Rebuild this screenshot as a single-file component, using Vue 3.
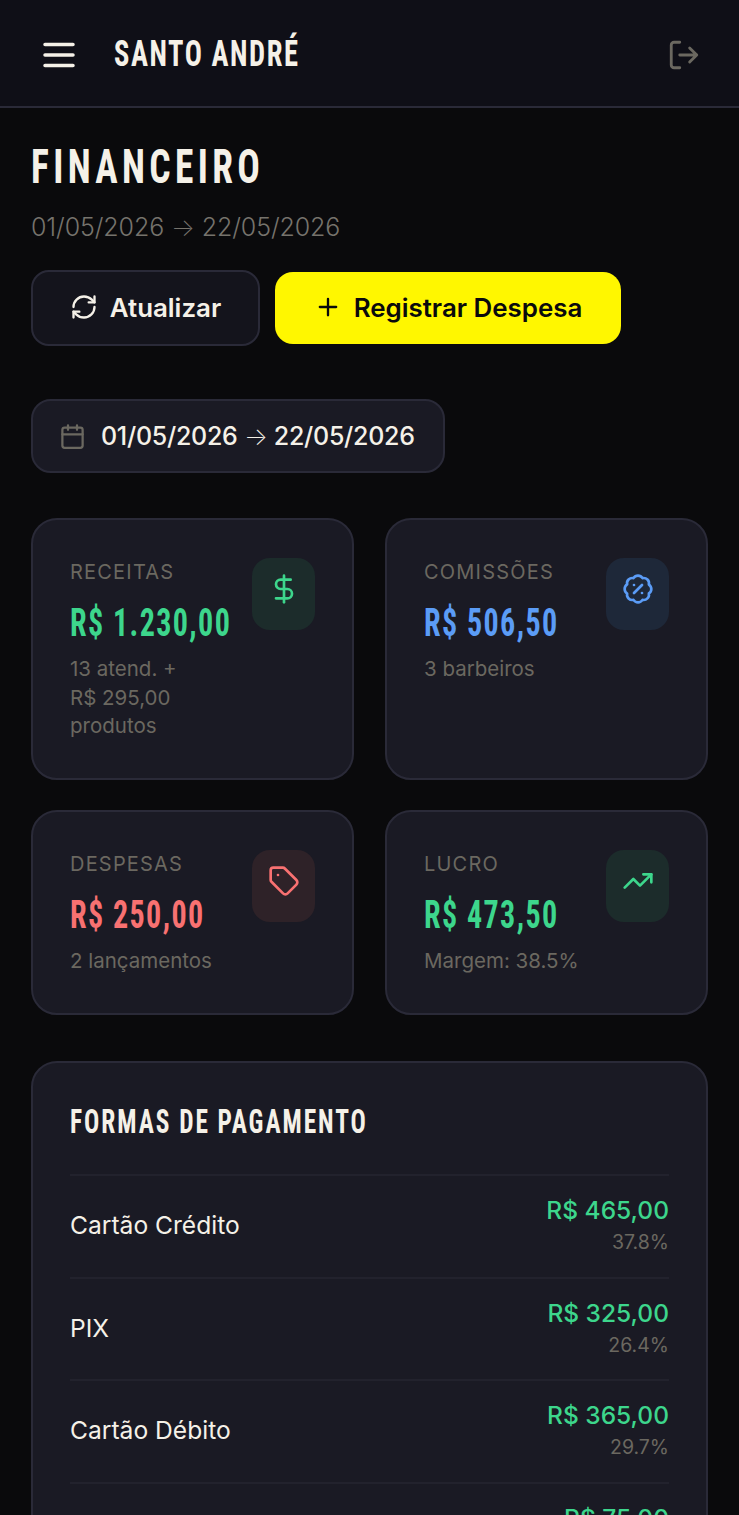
<template>
  <div class="page">
    <header class="topbar">
      <div class="topbar__left">
        <svg class="icon icon--menu" viewBox="0 0 24 24"><path d="M4 6h16M4 12h16M4 18h16" /></svg>
        <span class="brand">SANTO ANDRÉ</span>
      </div>
      <svg class="icon icon--logout" viewBox="0 0 24 24">
        <path d="M9 21H5a2 2 0 0 1-2-2V5a2 2 0 0 1 2-2h4" />
        <path d="M16 17l5-5-5-5M21 12H9" />
      </svg>
    </header>

    <main class="content">
      <h1 class="title">FINANCEIRO</h1>
      <p class="subtitle">{{ from }} <span class="arrow">→</span> {{ to }}</p>

      <div class="actions">
        <button class="btn btn--ghost">
          <svg class="icon icon--btn" viewBox="0 0 24 24">
            <path d="M3 12a9 9 0 0 1 9-9 9.75 9.75 0 0 1 6.74 2.74L21 8" />
            <path d="M21 3v5h-5" />
            <path d="M21 12a9 9 0 0 1-9 9 9.75 9.75 0 0 1-6.74-2.74L3 16" />
            <path d="M8 16H3v5" />
          </svg>
          Atualizar
        </button>
        <button class="btn btn--primary">
          <svg class="icon icon--btn" viewBox="0 0 24 24"><path d="M5 12h14M12 5v14" /></svg>
          Registrar Despesa
        </button>
      </div>

      <div class="range">
        <svg class="icon icon--cal" viewBox="0 0 24 24">
          <path d="M8 2v4M16 2v4M3 10h18" />
          <rect x="3" y="4" width="18" height="18" rx="2" />
        </svg>
        <span>{{ from }} <span class="arrow">→</span> {{ to }}</span>
      </div>

      <section class="stats">
        <article v-for="card in cards" :key="card.label" class="stat">
          <div class="stat__body">
            <div class="stat__label">{{ card.label }}</div>
            <div class="stat__value" :class="'c-' + card.color">{{ card.value }}</div>
            <div class="stat__note">{{ card.note }}</div>
          </div>
          <div class="stat__icon" :class="'bg-' + card.color">
            <svg class="icon icon--stat" :class="'c-' + card.color" viewBox="0 0 24 24" v-html="card.icon"></svg>
          </div>
        </article>
      </section>

      <section class="panel">
        <h2 class="panel__title">FORMAS DE PAGAMENTO</h2>
        <div v-for="row in payments" :key="row.name" class="pay">
          <span class="pay__name">{{ row.name }}</span>
          <div class="pay__right">
            <div class="pay__value">{{ row.value }}</div>
            <div class="pay__pct">{{ row.pct }}</div>
          </div>
        </div>
      </section>
    </main>
  </div>
</template>

<script setup>
const from = '01/05/2026'
const to = '22/05/2026'

const cards = [
  {
    label: 'RECEITAS',
    value: 'R$ 1.230,00',
    note: '13 atend. + R$\u00a0295,00 produtos',
    color: 'green',
    icon: '<path d="M12 2v20" /><path d="M17 5H9.5a3.5 3.5 0 0 0 0 7h5a3.5 3.5 0 0 1 0 7H6" />'
  },
  {
    label: 'COMISSÕES',
    value: 'R$ 506,50',
    note: '3 barbeiros',
    color: 'blue',
    icon: '<path d="M3.85 8.62a4 4 0 0 1 4.78-4.77 4 4 0 0 1 6.74 0 4 4 0 0 1 4.78 4.78 4 4 0 0 1 0 6.74 4 4 0 0 1-4.77 4.78 4 4 0 0 1-6.75 0 4 4 0 0 1-4.78-4.77 4 4 0 0 1 0-6.76Z" /><path d="m15 9-6 6" /><path d="M9 9h.01" /><path d="M15 15h.01" />'
  },
  {
    label: 'DESPESAS',
    value: 'R$ 250,00',
    note: '2 lançamentos',
    color: 'red',
    icon: '<path d="M12.586 2.586A2 2 0 0 0 11.172 2H4a2 2 0 0 0-2 2v7.172a2 2 0 0 0 .586 1.414l8.704 8.704a2.426 2.426 0 0 0 3.42 0l6.58-6.58a2.426 2.426 0 0 0 0-3.42z" /><path d="M7.5 7.5h.01" />'
  },
  {
    label: 'LUCRO',
    value: 'R$ 473,50',
    note: 'Margem: 38.5%',
    color: 'green',
    icon: '<path d="M16 7h6v6" /><path d="m22 7-8.5 8.5-5-5L2 17" />'
  }
]

const payments = [
  { name: 'Cartão Crédito', value: 'R$ 465,00', pct: '37.8%' },
  { name: 'PIX', value: 'R$ 325,00', pct: '26.4%' },
  { name: 'Cartão Débito', value: 'R$ 365,00', pct: '29.7%' },
  { name: 'Dinheiro', value: 'R$ 75,00', pct: '6.1%' }
]
</script>

<style>
html,
body {
  margin: 0;
  background: #0a0a0c;
  height: 1515px;
  overflow: hidden;
}
</style>

<style scoped>
.page {
  font-family: Inter, "Liberation Sans", sans-serif;
  color: #f5f1e8;
  background: #0a0a0c;
}

.icon {
  fill: none;
  stroke: currentColor;
  stroke-width: 2;
  stroke-linecap: round;
  stroke-linejoin: round;
  flex: none;
  display: block;
}

/* no Bebas here, so Roboto gets squeezed to the same narrow caps */
.brand,
.title,
.stat__value,
.panel__title {
  font-family: Roboto, sans-serif;
  font-stretch: 75%;
  font-weight: 700;
  transform: scaleX(0.78);
  transform-origin: left center;
}

.arrow {
  font-weight: 200;
}

.topbar {
  height: 108px;
  box-sizing: border-box;
  padding: 4px 38px 0;
  display: flex;
  align-items: center;
  justify-content: space-between;
  background: #0f0f17;
  border-bottom: 2px solid #2a2a38;
}

.topbar__left {
  display: flex;
  align-items: center;
  gap: 34px;
}

.icon--menu {
  width: 42px;
  height: 42px;
  color: #f5f1e8;
}

.brand {
  display: inline-block;
  font-size: 36.5px;
  line-height: 1;
  letter-spacing: 2px;
  margin-top: -2px;
}

.icon--logout {
  width: 34px;
  height: 34px;
  color: #6b6860;
}

.content {
  padding: 39px 31px 0;
}

.title {
  margin: 0;
  font-size: 48px;
  line-height: 40px;
  letter-spacing: 5.6px;
}

.subtitle {
  margin: 22px 0 0;
  font-size: 25px;
  font-weight: 300;
  letter-spacing: -0.1px;
  line-height: 36px;
  color: #76736c;
}

.actions {
  margin-top: 25px;
  display: flex;
  align-items: center;
  gap: 15px;
}

.btn {
  font-family: inherit;
  font-size: 25.9px;
  font-weight: 600;
  display: flex;
  align-items: center;
  justify-content: center;
  gap: 12px;
  box-sizing: border-box;
  border-radius: 18px;
  padding: 0 0 2px;
}

.btn--ghost {
  width: 229px;
  height: 76px;
  background: #14141c;
  border: 2px solid #2a2a38;
  color: #f5f1e8;
}

.btn--primary {
  width: 346px;
  height: 72px;
  background: #fff700;
  border: 0;
  color: #0a0a0c;
}

.icon--btn {
  width: 28px;
  height: 28px;
}

.range {
  margin-top: 53px;
  width: 414px;
  height: 74px;
  box-sizing: border-box;
  padding-left: 26px;
  display: flex;
  align-items: center;
  gap: 15px;
  background: #1a1a24;
  border: 2px solid #2a2a38;
  border-radius: 20px;
  font-size: 25px;
  letter-spacing: -0.28px;
  font-weight: 500;
}

.icon--cal {
  width: 27px;
  height: 27px;
  color: #6b6860;
}

.stats {
  margin-top: 45px;
  display: grid;
  grid-template-columns: 323px 323px;
  gap: 30px 31px;
}

.stat {
  box-sizing: border-box;
  padding: 38px 37px 37.2px;
  display: flex;
  justify-content: space-between;
  align-items: flex-start;
  background: #1a1a24;
  border: 2px solid #2a2a38;
  border-radius: 26px;
}

.stat__body {
  flex: 1;
  min-width: 0;
}

.stat__label {
  font-size: 20px;
  line-height: 28px;
  letter-spacing: 1.2px;
  color: #6b6860;
}

.stat__value {
  margin-top: 13px;
  font-size: 38.5px;
  line-height: 48px;
  letter-spacing: 1.8px;
  white-space: nowrap;
}

.stat__note {
  margin-top: 8px;
  font-size: 20.5px;
  line-height: 28.7px;
  color: #6b6860;
  max-width: 170px;
}

.stat__icon {
  width: 63px;
  height: 72px;
  border-radius: 18px;
  display: flex;
  justify-content: center;
  padding-top: 15px;
  box-sizing: border-box;
  flex: none;
}

.icon--stat {
  width: 32px;
  height: 32px;
}

.c-green { color: #3dd68c; }
.c-blue { color: #5b9cf6; }
.c-red { color: #f87171; }
.bg-green { background: #1c2c2b; }
.bg-blue { background: #1e2839; }
.bg-red { background: #2e2228; }

.panel {
  margin-top: 46px;
  box-sizing: border-box;
  padding: 39px 37px 0;
  height: 600px;
  background: #1a1a24;
  border: 2px solid #2a2a38;
  border-radius: 26px;
}

.panel__title {
  margin: 0 0 32px;
  font-size: 32.5px;
  line-height: 40px;
  letter-spacing: 2.5px;
}

.pay {
  height: 102.5px;
  box-sizing: border-box;
  border-top: 2px solid #22222d;
  display: flex;
  align-items: center;
  justify-content: space-between;
}

.pay__name {
  font-size: 24.6px;
  margin-top: -2px;
}

.pay__right {
  text-align: right;
  padding-top: 1px;
}

.pay__value {
  font-size: 24.5px;
  line-height: 32px;
  font-weight: 500;
  color: #3dd68c;
}

.pay__pct {
  font-size: 19.5px;
  line-height: 33px;
  color: #6b6860;
}
</style>
